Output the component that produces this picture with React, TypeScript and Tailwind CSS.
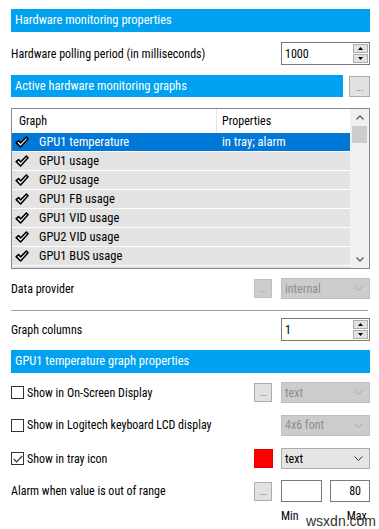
import React from "react";

const font = { fontFamily: "'Roboto Condensed', 'Liberation Sans', sans-serif" };

const rows = [
  { label: "GPU1 temperature", props: "in tray; alarm", selected: true },
  { label: "GPU1 usage", props: "" },
  { label: "GPU2 usage", props: "" },
  { label: "GPU1 FB usage", props: "" },
  { label: "GPU1 VID usage", props: "" },
  { label: "GPU2 VID usage", props: "" },
  { label: "GPU1 BUS usage", props: "" },
  { label: "GPU2 BUS usage", props: "" },
];

function Check() {
  return (
    <svg width="14" height="12" viewBox="0 0 14 12">
      <path
        d="M1.2 6.6 L3.6 4.6 L5.6 7 L11.4 1 L13 2.8 L5.6 11 Z"
        fill="white"
        stroke="black"
        strokeWidth="1.6"
        strokeLinejoin="round"
      />
    </svg>
  );
}

function SectionBar({ title, className = "" }: { title: string; className?: string }) {
  return (
    <div className={`flex h-[23px] items-center bg-[#00a2f0] px-[4px] text-[12.5px] text-white ${className}`}>
      {title}
    </div>
  );
}

function Spin({ value }: { value: string }) {
  return (
    <div className="flex h-[23px] w-[89px] items-center border border-[#7a7a7a] bg-white">
      <span className="flex-1 pl-[3px] text-black">{value}</span>
      <div className="mr-[1px] flex flex-col gap-[1px]">
        <div className="flex h-[9px] w-[15px] items-center justify-center border border-[#adadad] bg-[#e1e1e1]">
          <svg width="5" height="3" viewBox="0 0 5 3"><path d="M0 3 L2.5 0 L5 3 Z" fill="#000" /></svg>
        </div>
        <div className="flex h-[9px] w-[15px] items-center justify-center border border-[#adadad] bg-[#e1e1e1]">
          <svg width="5" height="3" viewBox="0 0 5 3"><path d="M0 0 L2.5 3 L5 0 Z" fill="#000" /></svg>
        </div>
      </div>
    </div>
  );
}

function Dots({ disabled = false, className = "" }: { disabled?: boolean; className?: string }) {
  return (
    <div
      className={`flex h-[19px] w-[18px] items-end justify-center pb-[3px] text-[9px] leading-none ${
        disabled ? "border border-[#bfbfbf] bg-[#cccccc] text-[#8c8c8c]" : "border border-[#adadad] bg-[#e1e1e1] text-[#333]"
      } ${className}`}
    >
      ...
    </div>
  );
}

function Combo({ value, disabled = false }: { value: string; disabled?: boolean }) {
  return (
    <div
      className={`flex h-[21px] w-[89px] items-center justify-between border px-[3px] ${
        disabled ? "border-[#bfbfbf] bg-[#cccccc] text-[#8d8d8d]" : "border-[#adadad] bg-[#e5e5e5] text-black"
      }`}
    >
      <span>{value}</span>
      <svg width="9" height="5" viewBox="0 0 9 5" className="mr-[3px]">
        <path d="M0.5 0.5 L4.5 4.5 L8.5 0.5" fill="none" stroke={disabled ? "#a8a8a8" : "#333"} strokeWidth="1" />
      </svg>
    </div>
  );
}

function CheckBox({ checked = false }: { checked?: boolean }) {
  return (
    <div className="flex h-[13px] w-[13px] items-center justify-center border border-[#333] bg-white">
      {checked && (
        <svg width="10" height="8" viewBox="0 0 10 8">
          <path d="M0.8 4 L3.6 6.8 L9.2 1" fill="none" stroke="#333" strokeWidth="1.2" />
        </svg>
      )}
    </div>
  );
}

export default function App() {
  return (
    <div className="relative h-[529px] w-[379px] overflow-hidden bg-white pl-[11px] pr-[9px] text-[12px] text-black" style={font}>
      <SectionBar title="Hardware monitoring properties" className="mt-[9px]" />

      <div className="mt-[10px] flex h-[23px] items-center justify-between">
        <span>Hardware polling period (in milliseconds)</span>
        <Spin value="1000" />
      </div>

      <div className="mt-[10px] flex h-[22px] items-center justify-between">
        <div className="flex h-[22px] w-[332px] items-center bg-[#00a2f0] px-[4px] text-[12.5px] text-white">
          Active hardware monitoring graphs
        </div>
        <Dots className="h-[21px] w-[21px]" />
      </div>

      {/* graph list */}
      <div className="mt-[11px] flex h-[161px] border border-[#828790] bg-white">
        <div className="flex-1 overflow-hidden">
          <div className="flex h-[24px] items-center">
            <span className="w-[204px] pl-[7px]">Graph</span>
            <span className="h-full w-px bg-[#e5e5e5]" />
            <span className="pl-[5px]">Properties</span>
          </div>
          {rows.map((r) => (
            <div
              key={r.label}
              className={`flex h-[19px] items-center border-b border-white text-[12.5px] ${
                r.selected ? "bg-[#0078d7] text-white" : "bg-[#e3e3e3]"
              }`}
            >
              <span className="flex w-[205px] items-center pl-[3px]">
                <Check />
                <span className="ml-[10px]">{r.label}</span>
              </span>
              <span className="pl-[5px]">{r.props}</span>
            </div>
          ))}
        </div>
        <div className="flex w-[19px] flex-col items-center bg-[#f0f0f0]">
          <div className="flex h-[17px] items-center">
            <svg width="8" height="5" viewBox="0 0 8 5"><path d="M0.5 4.5 L4 1 L7.5 4.5" fill="none" stroke="#606060" strokeWidth="1.3" /></svg>
          </div>
          <div className="h-[17px] w-[15px] bg-[#cdcdcd]" />
          <div className="flex-1" />
          <div className="flex h-[17px] items-center">
            <svg width="8" height="5" viewBox="0 0 8 5"><path d="M0.5 0.5 L4 4 L7.5 0.5" fill="none" stroke="#606060" strokeWidth="1.3" /></svg>
          </div>
        </div>
      </div>

      <div className="mt-[10px] flex h-[19px] items-center">
        <span className="flex-1">Data provider</span>
        <Dots disabled />
        <div className="ml-[9px]">
          <Combo value="internal" disabled />
        </div>
      </div>

      <div className="mt-[12px] mr-[2px] h-px bg-[#a0a0a0]" />

      <div className="mt-[8px] flex h-[21px] items-center justify-between">
        <span>Graph columns</span>
        <Spin value="1" />
      </div>

      <SectionBar title="GPU1 temperature graph properties" className="mt-[10px]" />

      <div className="mt-[10px] flex h-[19px] items-center">
        <CheckBox />
        <span className="ml-[3px] flex-1">Show in On-Screen Display</span>
        <Dots />
        <div className="ml-[9px]">
          <Combo value="text" disabled />
        </div>
      </div>

      <div className="mt-[12px] flex h-[22px] items-center">
        <CheckBox />
        <span className="ml-[3px] flex-1">Show in Logitech keyboard LCD display</span>
        <Combo value="4x6 font" disabled />
      </div>

      <div className="mt-[12px] flex h-[21px] items-center">
        <CheckBox checked />
        <span className="ml-[3px] flex-1">Show in tray icon</span>
        <div className="h-[19px] w-[19px] border border-[#e00000] bg-[#ff0000]" />
        <div className="ml-[8px]">
          <Combo value="text" />
        </div>
      </div>

      <div className="mt-[11px] flex h-[22px] items-center">
        <span className="flex-1">Alarm when value is out of range</span>
        <Dots />
        <div className="ml-[9px] h-[22px] w-[41px] border border-[#7a7a7a] bg-white" />
        <div className="ml-[8px] flex h-[22px] w-[40px] items-center justify-end border border-[#7a7a7a] bg-white pr-[8px]">80</div>
      </div>

      <div className="mt-[5px] flex">
        <span className="ml-[270px]">Min</span>
        <span className="ml-[48px]">Max</span>
      </div>

      <span className="absolute left-[306px] top-[511px] text-[14px] text-[#333]" style={{ fontFamily: "'Liberation Sans', sans-serif" }}>
        wsxdn.com
      </span>
    </div>
  );
}
